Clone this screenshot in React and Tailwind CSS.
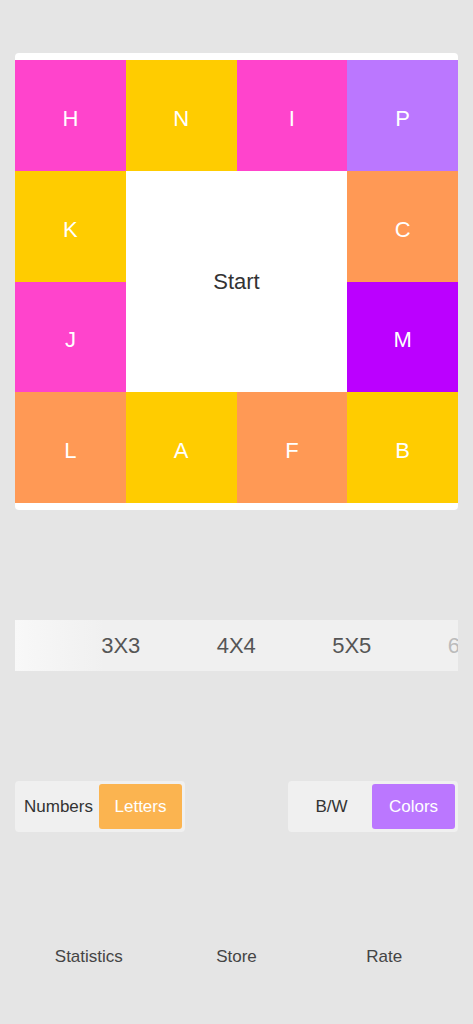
const cells = [
  { l: 'H', c: 'bg-[#ff44cc]' },
  { l: 'N', c: 'bg-[#ffcc00]' },
  { l: 'I', c: 'bg-[#ff44cc]' },
  { l: 'P', c: 'bg-[#bb77ff]' },
  { l: 'K', c: 'bg-[#ffcc00]' },
  null,
  null,
  { l: 'C', c: 'bg-[#ff9955]' },
  { l: 'J', c: 'bg-[#ff44cc]' },
  null,
  null,
  { l: 'M', c: 'bg-[#bb00ff]' },
  { l: 'L', c: 'bg-[#ff9955]' },
  { l: 'A', c: 'bg-[#ffcc00]' },
  { l: 'F', c: 'bg-[#ff9955]' },
  { l: 'B', c: 'bg-[#ffcc00]' },
]

function Board() {
  return (
    <div className="mx-[15px] bg-white rounded-[4px] py-[7px]">
      <div className="grid grid-cols-4 grid-rows-4 h-[443px]">
        {cells.map((cell, i) => {
          if (i === 5) {
            return (
              <div key={i} className="col-span-2 row-span-2 flex items-center justify-center text-[22px] text-[#333]">
                Start
              </div>
            )
          }
          if (!cell) return null
          return (
            <div key={i} className={`${cell.c} flex items-center justify-center pt-[6px] text-white text-[22px]`}>
              {cell.l}
            </div>
          )
        })}
      </div>
    </div>
  )
}

function SizePicker() {
  const sizes = ['3X3', '4X4', '5X5', '6X6']
  return (
    <div className="relative mx-[15px] mt-[110px] h-[51px] bg-[#f0f0f0] overflow-hidden">
      <div className="flex h-full items-center pl-[48px]">
        {sizes.map((s, i) => (
          <div
            key={s}
            className={`w-[115.5px] shrink-0 text-center text-[22px] ${i === 3 ? 'text-[#bbb]' : 'text-[#555]'}`}
          >
            {s}
          </div>
        ))}
      </div>
      <div className="absolute inset-y-0 left-0 w-[90px] bg-gradient-to-r from-[#f8f8f8] to-transparent" />
    </div>
  )
}

function Toggle({ left, right, active }) {
  return (
    <div className="flex h-[51px] w-[170px] bg-[#f0f0f0] rounded-[4px] p-[3px]">
      <div className="flex-1 flex items-center justify-center text-[17px] text-[#333]">{left}</div>
      <div className={`${active} w-[83px] rounded-[3px] flex items-center justify-center text-[17px] text-white`}>
        {right}
      </div>
    </div>
  )
}

export default function App() {
  return (
    <div className="min-h-screen bg-[#e5e5e5] pt-[53px]" style={{ fontFamily: '"Liberation Sans", Arial, sans-serif' }}>
      <Board />
      <SizePicker />
      <div className="mx-[15px] mt-[110px] flex justify-between">
        <Toggle left="Numbers" right="Letters" active="bg-[#fbb450]" />
        <Toggle left="B/W" right="Colors" active="bg-[#bb77ff]" />
      </div>
      <div className="mx-[15px] mt-[115px] grid grid-cols-3 text-center text-[17px] text-[#444] leading-[20px]">
        <div>Statistics</div>
        <div>Store</div>
        <div>Rate</div>
      </div>
    </div>
  )
}
